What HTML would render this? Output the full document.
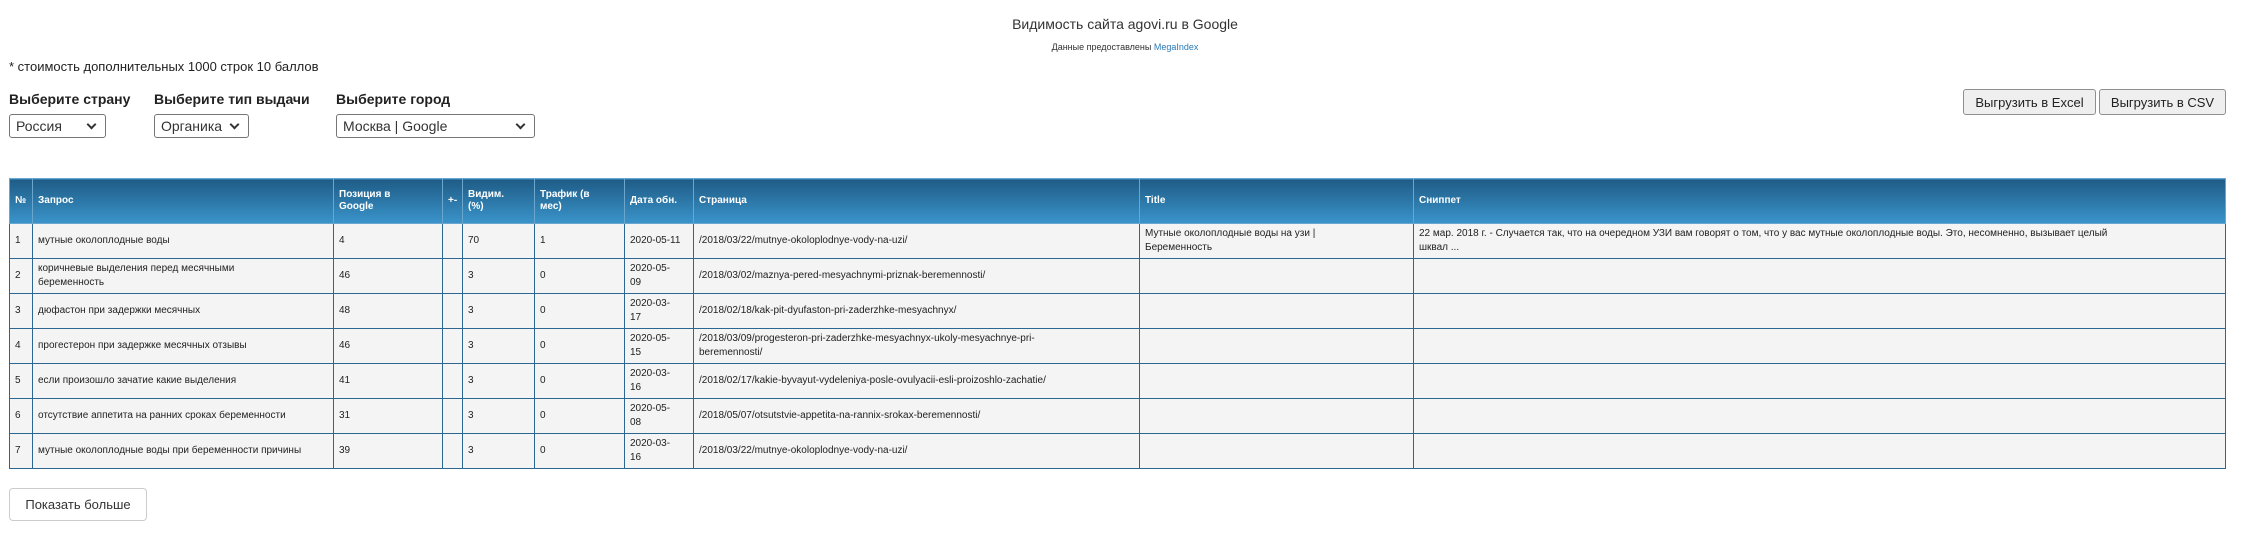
<!DOCTYPE html>
<html><head><meta charset="utf-8"><style>
body{margin:0;width:2250px;height:546px;background:#fff;font-family:"Liberation Sans",Arial,sans-serif;color:#333;position:relative;overflow:hidden}
.a{position:absolute;white-space:nowrap}
.sel{position:absolute;top:114px;height:24px;border:1px solid #767676;border-radius:3px;box-sizing:border-box;font-size:14px;padding:3px 6px;color:#333;background:#fff}
.sel:after{content:"";position:absolute;right:10px;top:6px;width:5px;height:5px;border-right:2px solid #333;border-bottom:2px solid #333;transform:rotate(45deg)}
.btn{position:absolute;top:89px;height:26px;border:1px solid #8f8f8f;border-radius:3px;background:#efefef;box-sizing:border-box;font-size:13px;padding:5px 0;text-align:center;color:#222;white-space:nowrap}
table{position:absolute;left:9px;top:178px;width:2217px;border-collapse:collapse;table-layout:fixed;font-size:10px}
th{background:linear-gradient(#1f5c86,#3a94cb);color:#fff;text-align:left;font-weight:bold;height:44px;padding:0 5px;border:1px solid #6aa6cd;vertical-align:middle;line-height:12px}
td{background:#f4f4f4;border:1.5px solid #2b6790;padding:0 5px;height:34px;color:#222;line-height:14px;vertical-align:middle}
</style></head><body>
<div class="a" style="left:0;width:2250px;text-align:center;top:16px;font-size:14px;color:#333">Видимость сайта agovi.ru в Google</div>
<div class="a" style="left:0;width:2250px;text-align:center;top:42px;font-size:9px;color:#333">Данные предоставлены <span style="color:#2a7ab8">MegaIndex</span></div>
<div class="a" style="left:9px;top:59px;font-size:13px;color:#222">* стоимость дополнительных 1000 строк 10 баллов</div>
<div class="a" style="left:9px;top:91px;font-size:14px;font-weight:bold;color:#222">Выберите страну</div>
<div class="a" style="left:154px;top:91px;font-size:14px;font-weight:bold;color:#222">Выберите тип выдачи</div>
<div class="a" style="left:336px;top:91px;font-size:14px;font-weight:bold;color:#222">Выберите город</div>
<div class="sel" style="left:9px;width:97px">Россия</div>
<div class="sel" style="left:154px;width:95px">Органика</div>
<div class="sel" style="left:336px;width:199px">Москва | Google</div>
<div class="btn" style="left:1963px;width:133px">Выгрузить в Excel</div>
<div class="btn" style="left:2099px;width:127px">Выгрузить в CSV</div>
<table>
<colgroup><col style="width:23px"><col style="width:301px"><col style="width:109px"><col style="width:20px"><col style="width:72px"><col style="width:90px"><col style="width:69px"><col style="width:446px"><col style="width:274px"><col></colgroup>
<tr><th>№</th><th>Запрос</th><th>Позиция в<br>Google</th><th>+-</th><th>Видим.<br>(%)</th><th>Трафик (в<br>мес)</th><th>Дата обн.</th><th>Страница</th><th>Title</th><th>Сниппет</th></tr>
<tr><td>1</td><td>мутные околоплодные воды</td><td>4</td><td></td><td>70</td><td>1</td><td>2020-05-11</td><td>/2018/03/22/mutnye-okoloplodnye-vody-na-uzi/</td><td>Мутные околоплодные воды на узи |<br>Беременность</td><td>22 мар. 2018 г. - Случается так, что на очередном УЗИ вам говорят о том, что у вас мутные околоплодные воды. Это, несомненно, вызывает целый<br>шквал ...</td></tr>
<tr><td>2</td><td>коричневые выделения перед месячными<br>беременность</td><td>46</td><td></td><td>3</td><td>0</td><td>2020-05-<br>09</td><td>/2018/03/02/maznya-pered-mesyachnymi-priznak-beremennosti/</td><td></td><td></td></tr>
<tr><td>3</td><td>дюфастон при задержки месячных</td><td>48</td><td></td><td>3</td><td>0</td><td>2020-03-<br>17</td><td>/2018/02/18/kak-pit-dyufaston-pri-zaderzhke-mesyachnyx/</td><td></td><td></td></tr>
<tr><td>4</td><td>прогестерон при задержке месячных отзывы</td><td>46</td><td></td><td>3</td><td>0</td><td>2020-05-<br>15</td><td>/2018/03/09/progesteron-pri-zaderzhke-mesyachnyx-ukoly-mesyachnye-pri-<br>beremennosti/</td><td></td><td></td></tr>
<tr><td>5</td><td>если произошло зачатие какие выделения</td><td>41</td><td></td><td>3</td><td>0</td><td>2020-03-<br>16</td><td>/2018/02/17/kakie-byvayut-vydeleniya-posle-ovulyacii-esli-proizoshlo-zachatie/</td><td></td><td></td></tr>
<tr><td>6</td><td>отсутствие аппетита на ранних сроках беременности</td><td>31</td><td></td><td>3</td><td>0</td><td>2020-05-<br>08</td><td>/2018/05/07/otsutstvie-appetita-na-rannix-srokax-beremennosti/</td><td></td><td></td></tr>
<tr><td>7</td><td>мутные околоплодные воды при беременности причины</td><td>39</td><td></td><td>3</td><td>0</td><td>2020-03-<br>16</td><td>/2018/03/22/mutnye-okoloplodnye-vody-na-uzi/</td><td></td><td></td></tr>
</table>
<div class="a" style="left:9px;top:488px;width:138px;height:33px;border:1px solid #ccc;border-radius:4px;box-sizing:border-box;font-size:13px;line-height:31px;text-align:center;color:#333">Показать больше</div>
</body></html>
